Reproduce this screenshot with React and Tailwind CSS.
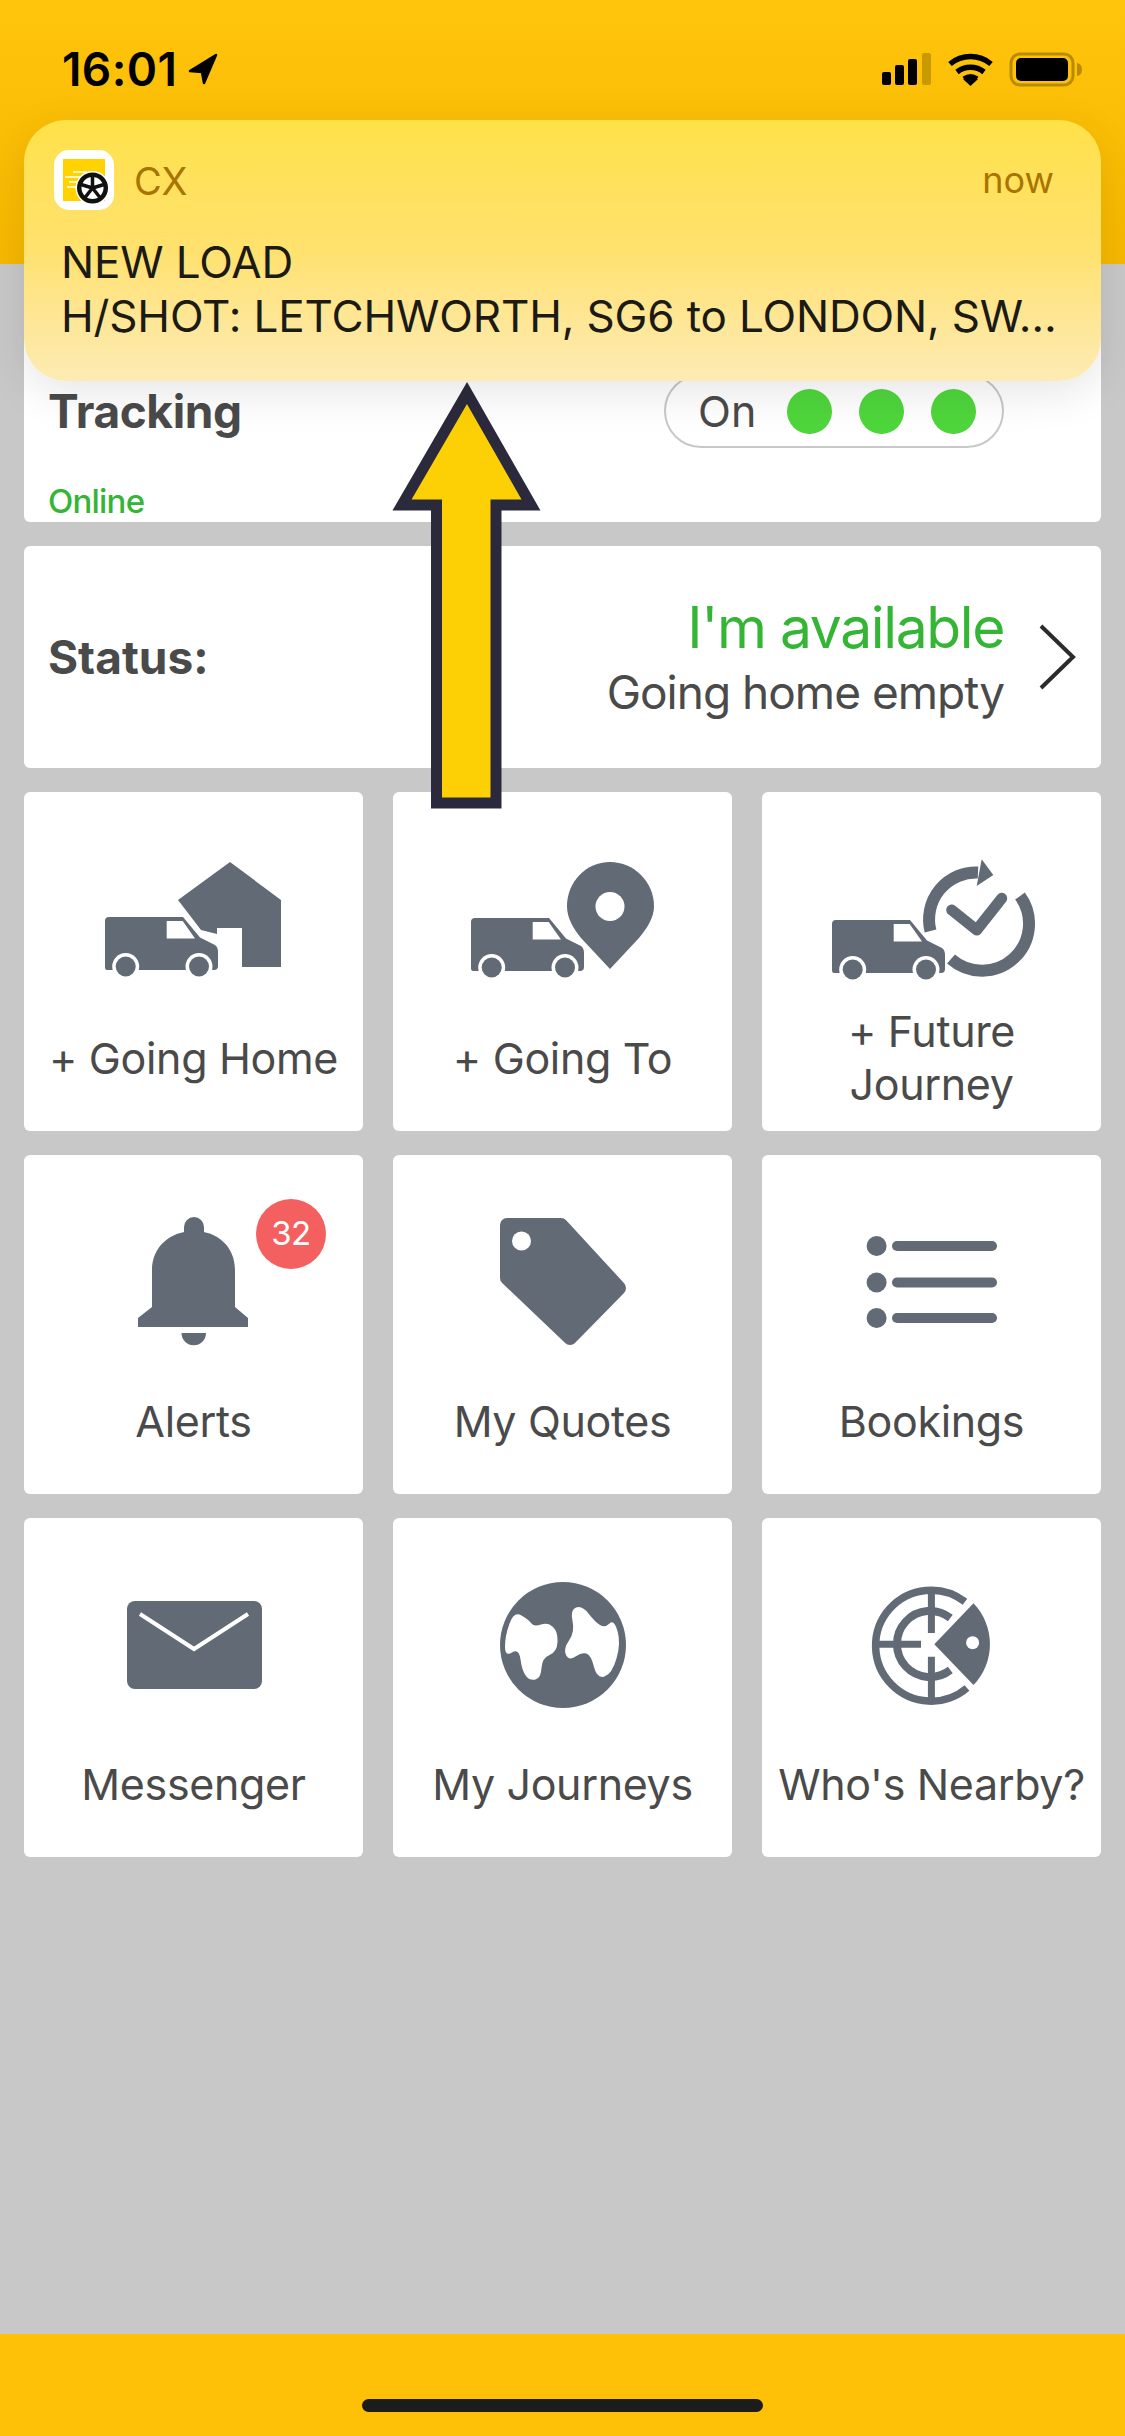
import React from "react";

const GREY = "#626a75";

// closes a smooth outline through the midpoints of the given points
const smooth = (pts) => {
  const mid = (a, b) => [(a[0] + b[0]) / 2, (a[1] + b[1]) / 2];
  const start = mid(pts[pts.length - 1], pts[0]);
  let d = `M${start[0]} ${start[1]}`;
  pts.forEach((p, i) => {
    const m = mid(p, pts[(i + 1) % pts.length]);
    d += ` Q${p[0]} ${p[1]} ${m[0]} ${m[1]}`;
  });
  return d + "Z";
};

const Van = ({ x, y }) => (
  <g transform={`translate(${x} ${y})`}>
    <path
      d="M4 0H78L95 20.5L110 28Q113 30 113 35V49Q113 53 109 53H2Q0 53 0 50V4Q0 0 4 0Z"
      fill={GREY}
    />
    <path d="M61.7 4H77.7L90 21.5H61.7Z" fill="#fff" />
    <circle cx="20.7" cy="49.5" r="13.5" fill="#fff" />
    <circle cx="94" cy="49.5" r="13.5" fill="#fff" />
    <circle cx="20.7" cy="49.5" r="10" fill={GREY} />
    <circle cx="94" cy="49.5" r="10" fill={GREY} />
  </g>
);

const GoingHomeIcon = () => (
  <>
    <path d="M206 70L257 108V175H218V136H193V142L177 138L154 108Z" fill={GREY} />
    <Van x={81} y={125} />
  </>
);

const GoingToIcon = () => (
  <>
    <path
      d="M217 70C241 70 261 90 261 114C261 126 254 136 246 146L217 177L188 146C180 136 174 126 174 114C174 90 193 70 217 70Z"
      fill={GREY}
    />
    <circle cx="217" cy="114.5" r="14.5" fill="#fff" />
    <Van x={78} y={126} />
  </>
);

const FutureIcon = () => (
  <>
    <path d="M258 104A47 47 0 0 1 189 167" fill="none" stroke={GREY} strokeWidth="12" />
    <path d="M168.500 139A47 47 0 0 1 216 80.500" fill="none" stroke={GREY} strokeWidth="12" />
    <path d="M219.7 67.3L231.3 83L214.7 94Z" fill={GREY} />
    <path
      d="M189.7 118L214.7 138L239.7 106.3"
      fill="none"
      stroke={GREY}
      strokeWidth="11"
      strokeLinecap="round"
      strokeLinejoin="round"
    />
    <Van x={70} y={128} />
  </>
);

const BellIcon = () => (
  <>
    <rect x="160" y="62" width="20" height="26" rx="10" fill={GREY} />
    <path
      d="M128 152V115C128 92 146 76 170 76C194 76 211 92 211 115V152L224 163V172H114V163Z"
      fill={GREY}
    />
    <path d="M157.5 178H182A12.25 12.25 0 0 1 157.5 178Z" fill={GREY} />
  </>
);

const TagIcon = () => (
  <>
    <path
      d="M114 70H168L226 133L177 183L114 123Z"
      fill={GREY}
      stroke={GREY}
      strokeWidth="14"
      strokeLinejoin="round"
    />
    <circle cx="128.5" cy="86" r="9.5" fill="#fff" />
  </>
);

const ListIcon = () => (
  <>
    {[91, 127.5, 163].map((y) => (
      <g key={y}>
        <circle cx="114.6" cy={y} r="10" fill={GREY} />
        <rect x="130" y={y - 5} width="105" height="10" rx="5" fill={GREY} />
      </g>
    ))}
  </>
);

const MailIcon = () => (
  <>
    <rect x="103" y="83" width="135" height="88" rx="8" fill={GREY} />
    <path d="M116 96L170 131L224 96" fill="none" stroke="#fff" strokeWidth="4" />
  </>
);

const GlobeIcon = () => (
  <>
    <circle cx="170" cy="127" r="63" fill={GREY} />
    <path
      d={smooth([
        [121, 93], [136, 102], [141, 109], [155, 104], [165, 114], [164, 134], [149, 140],
        [148, 160], [137, 163], [129, 153], [126, 130], [112, 139], [112, 118],
      ])}
      fill="#fff"
    />
    <path
      d={smooth([
        [177, 92], [189, 87], [202, 104], [212, 110], [221, 101], [228, 125], [219, 156],
        [204, 161], [198, 137], [189, 134], [176, 143], [170, 131], [182, 114],
      ])}
      fill="#fff"
    />
  </>
);

const RadarIcon = () => (
  <>
    <path d="M203 83.7A55.5 55.5 0 1 0 205 170" fill="none" stroke={GREY} strokeWidth="7.5" />
    <path d="M188.3 100A33 33 0 1 0 188.3 152" fill="none" stroke={GREY} strokeWidth="8" />
    <path d="M169.4 72V115M169.4 138.7V182M115 126.3H159" fill="none" stroke={GREY} strokeWidth="7" />
    <path d="M172.3 126.3L211.5 85.3A59 59 0 0 1 211.5 167Z" fill={GREY} />
    <circle cx="210.6" cy="124.7" r="6.5" fill="#fff" />
  </>
);

const tiles = [
  { label: "+ Going Home", icon: <GoingHomeIcon /> },
  { label: "+ Going To", icon: <GoingToIcon /> },
  { label: "+ Future Journey", icon: <FutureIcon />, narrow: true },
  { label: "Alerts", icon: <BellIcon />, badge: "32" },
  { label: "My Quotes", icon: <TagIcon /> },
  { label: "Bookings", icon: <ListIcon /> },
  { label: "Messenger", icon: <MailIcon /> },
  { label: "My Journeys", icon: <GlobeIcon /> },
  { label: "Who's Nearby?", icon: <RadarIcon /> },
];

const Tile = ({ label, icon, badge, narrow }) => (
  <div className="relative flex h-[339px] flex-col rounded-[6px] bg-white">
    <svg viewBox="0 0 339 200" className="h-[200px] w-full">
      {icon}
    </svg>
    {badge && (
      <div className="absolute left-[232px] top-[44px] flex h-[70px] w-[70px] items-center justify-center rounded-full bg-[#f45f5f] text-[33px] tracking-[-0.5px] text-white">
        {badge}
      </div>
    )}
    <div
      className={`flex h-[132px] items-center justify-center text-center text-[43px] leading-[53px] tracking-[-0.35px] text-[#4a4a4a] ${
        narrow ? "px-[60px]" : ""
      }`}
    >
      {label}
    </div>
  </div>
);

const StatusBar = () => (
  <div className="flex items-start justify-between">
    <div className="ml-[62px] mt-[44px] flex items-center">
      <span className="text-[46px] font-semibold leading-[50px] tracking-[0.4px] text-black">16:01</span>
      <svg viewBox="0 0 30 32" className="ml-[11px] h-[32px] w-[30px]">
        <path d="M28 2L2 18L14 19L16 30Z" fill="#000" stroke="#000" strokeWidth="2.5" strokeLinejoin="round" />
      </svg>
    </div>
    <svg viewBox="880 50 204 38" className="mr-[41px] mt-[50px] h-[38px] w-[204px]">
      <rect x="882" y="72" width="9" height="13" rx="2" fill="#000" />
      <rect x="895" y="65" width="9" height="20" rx="2" fill="#000" />
      <rect x="908" y="59" width="9" height="26" rx="2" fill="#000" />
      <rect x="922" y="53" width="9" height="32" rx="2" fill="#c99a00" />
      <path d="M950 64A32 32 0 0 1 991 64M957 72A22 22 0 0 1 984 72M964 79A12 12 0 0 1 977 79" fill="none" stroke="#000" strokeWidth="5.5" />
      <path d="M970.5 86L963 79H978Z" fill="#000" />
      <rect x="1011" y="54" width="62" height="31" rx="9" fill="none" stroke="#b98c00" strokeWidth="3" />
      <rect x="1016" y="58" width="52" height="23" rx="5" fill="#000" />
      <path d="M1077 63Q1082 64 1082 69.500Q1082 75 1077 76Z" fill="#b98c00" />
    </svg>
  </div>
);

const Notification = () => (
  <div className="absolute left-[24px] top-[120px] h-[261px] w-[1077px] rounded-[42px] bg-gradient-to-b from-[#ffe148] via-[#ffe16e] to-[#fdebb3] shadow-[0_12px_44px_rgba(0,0,0,0.10)]">
    <div className="flex items-center justify-between pl-[30px] pr-[47px] pt-[30px]">
      <div className="flex items-center">
        <svg viewBox="0 0 60 60" className="h-[60px] w-[60px]">
          <rect width="60" height="60" rx="15" fill="#fff" />
          <rect x="9" y="9" width="42" height="42" fill="#ffd200" />
          <path d="M19 22H33M11 27H28M15 32H26M13 37H24" stroke="#fff" strokeWidth="1.5" />
          <circle cx="38.500" cy="38" r="17" fill="#fff" />
          <circle cx="38.500" cy="38" r="15.500" fill="#111" />
          <circle cx="38.500" cy="38" r="11" fill="#fff" />
          <circle cx="38.500" cy="38" r="2.500" fill="#111" />
          <path d="M38.500 38V26M38.500 38L50 34.500M38.500 38L46 47.500M38.500 38L31 47.500M38.500 38L27 34.500" stroke="#111" strokeWidth="3.500" />
        </svg>
        <span className="ml-[20px] mt-[2px] text-[38px] leading-[46px] text-[#a87400]">CX</span>
      </div>
      <span className="text-[36px] leading-[46px] text-[#a87400]">now</span>
    </div>
    <div className="mt-[25px] whitespace-nowrap pl-[37px] text-[44px] leading-[54px] tracking-[-0.15px] text-[#1c1a14]">
      <div>NEW LOAD</div>
      <div>H/SHOT: LETCHWORTH, SG6 to LONDON, SW…</div>
    </div>
  </div>
);

const UpArrow = () => (
  <svg viewBox="388 378 158 436" className="absolute left-[388px] top-[378px] h-[436px] w-[158px]">
    <path
      d="M467 393L531 505H496V803H436.500V505H402Z"
      fill="#fcd005"
      stroke="#2a2a3c"
      strokeWidth="11"
      strokeLinejoin="miter"
    />
  </svg>
);

export default function App() {
  return (
    <div className="relative flex h-[2436px] w-[1125px] flex-col overflow-hidden bg-[#c8c8c8] font-['Inter',sans-serif]">
      <div className="h-[264px] bg-gradient-to-b from-[#ffc40c] to-[#f7b800]">
        <StatusBar />
      </div>

      <div className="flex flex-1 flex-col px-[24px]">
        <div className="mt-[16px] h-[242px] rounded-[6px] bg-white px-[24px] pt-[94px]">
          <div className="flex items-center justify-between pr-[73px]">
            <span className="text-[46px] font-bold leading-[74px] tracking-[-0.4px] text-[#4a4a4a]">Tracking</span>
            <div className="flex h-[74px] w-[340px] items-center rounded-full border-2 border-[#c8c8c8] pl-[32px]">
              <span className="w-[89px] text-[43px] text-[#4a4a4a]">On</span>
              <div className="flex gap-[27px]">
                <span className="h-[45px] w-[45px] rounded-full bg-[#4fd63c]" />
                <span className="h-[45px] w-[45px] rounded-full bg-[#4fd63c]" />
                <span className="h-[45px] w-[45px] rounded-full bg-[#4fd63c]" />
              </div>
            </div>
          </div>
          <div className="mt-[33px] text-[33px] font-medium leading-[40px] tracking-[-0.8px] text-[#35b535]">Online</div>
        </div>

        <div className="mt-[24px] flex h-[222px] items-center justify-between rounded-[6px] bg-white pl-[24px] pr-[25px]">
          <span className="text-[46px] font-bold text-[#4a4a4a]">Status:</span>
          <div className="flex items-center">
            <div className="pt-[4px] text-right">
              <div className="text-[57px] leading-[66px] tracking-[-1.4px] text-[#35b535]">I'm available</div>
              <div className="text-[46px] leading-[62px] tracking-[-1px] text-[#4a4a4a]">Going home empty</div>
            </div>
            <svg viewBox="0 0 38 66" className="ml-[34px] h-[66px] w-[38px]">
              <path d="M3 2L35 33L3 64" fill="none" stroke="#2b2b2b" strokeWidth="4" />
            </svg>
          </div>
        </div>

        <div className="mt-[24px] grid grid-cols-3 gap-x-[30px] gap-y-[24px]">
          {tiles.map((t) => (
            <Tile key={t.label} {...t} />
          ))}
        </div>
      </div>

      <div className="h-[102px] bg-[#ffc107] pt-[65px]">
        <div className="mx-auto h-[13px] w-[401px] rounded-full bg-[#1c1c1c]" />
      </div>

      <UpArrow />
      <Notification />
    </div>
  );
}
